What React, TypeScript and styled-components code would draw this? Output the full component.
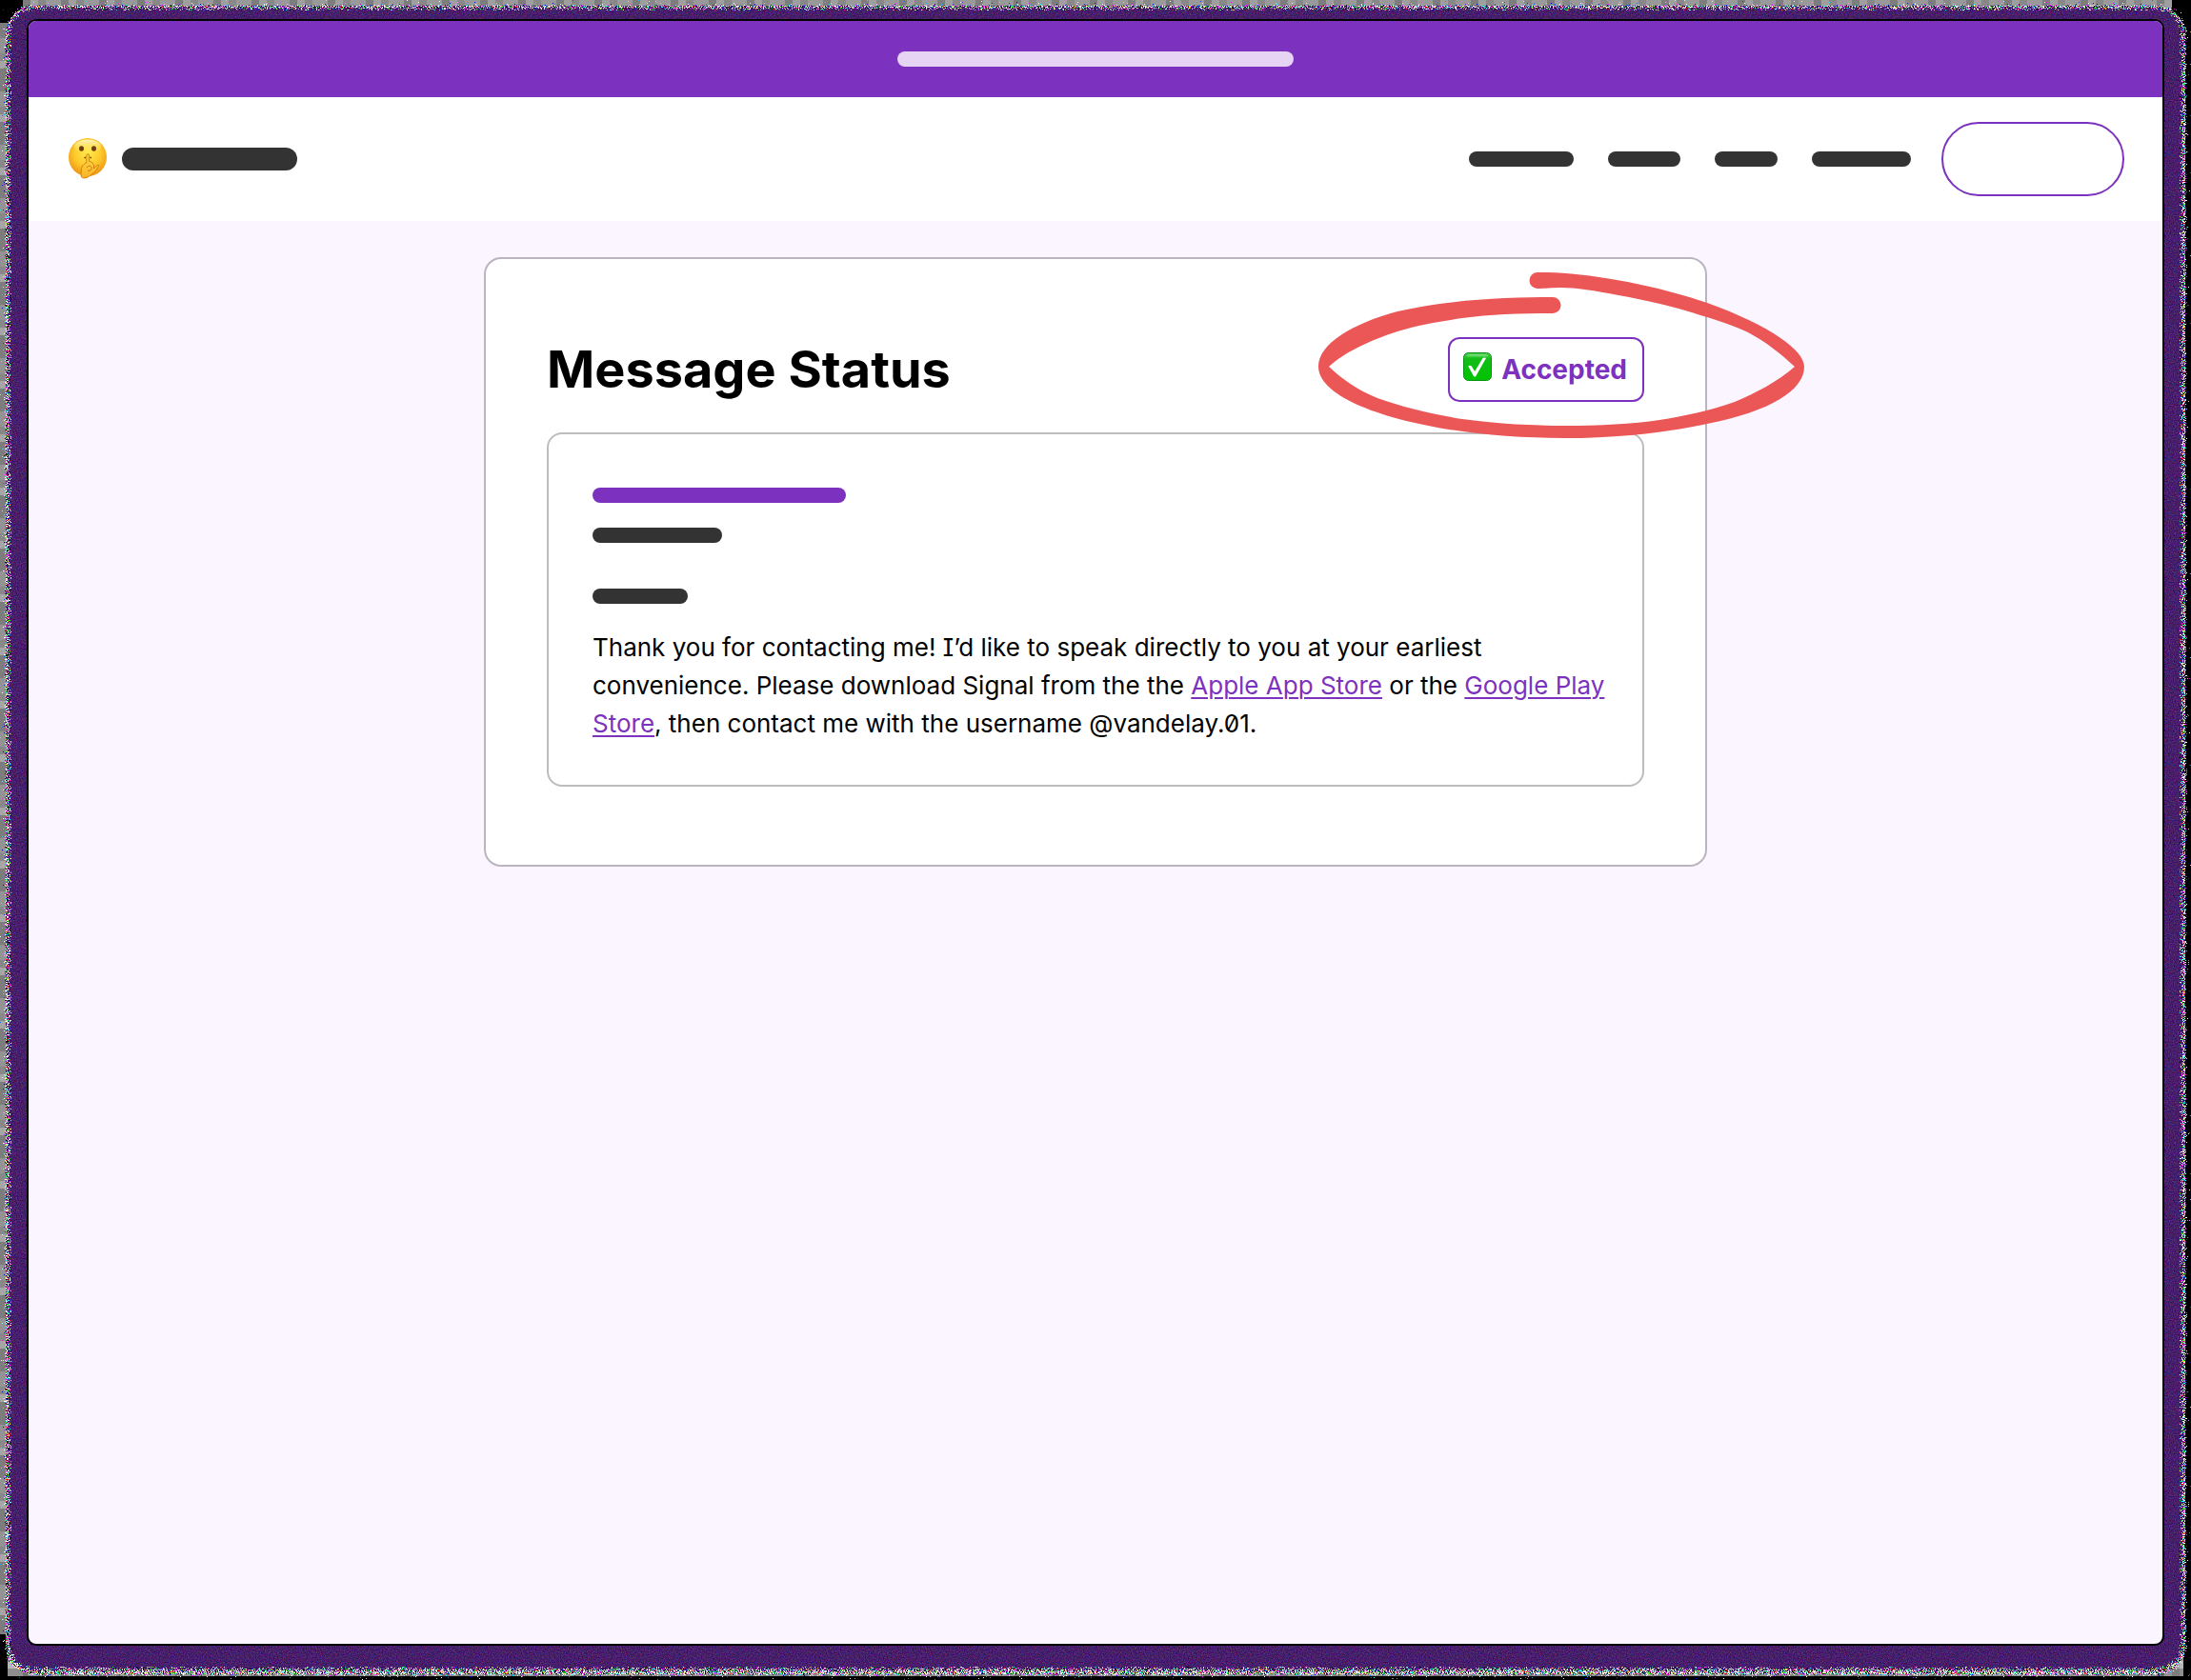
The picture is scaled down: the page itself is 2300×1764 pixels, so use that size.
import React from "react";
import styled, { createGlobalStyle } from "styled-components";

const purple = "#7c32be";
const sans = `Inter, "Liberation Sans", Arial, sans-serif`;

const GlobalStyle = createGlobalStyle`
  *, *::before, *::after { box-sizing: border-box; }
  body {
    margin: 0;
    background: #000;
    color: #000;
    font-family: ${sans};
  }
`;

const Stage = styled.div`
  position: relative;
  display: flex;
  min-height: 100vh;
  padding: 20px 28px 36px;
  overflow: hidden;
  isolation: isolate;
`;

const Backdrop = styled.div`
  position: absolute;
  z-index: -3;
  inset: 0 8px 4px 0;
  background:
    linear-gradient(#000, #000) 0 0 / 24px 24px no-repeat,
    linear-gradient(#000, #000) 0 100% / 8px 44px no-repeat,
    linear-gradient(#000, #000) 100% 0 / 12px 24px no-repeat,
    repeating-linear-gradient(90deg, #8885 0 8px, #bbb5 8px 24px, #6665 24px 32px, #ccc5 32px 40px),
    repeating-linear-gradient(#888 0 8px, #b5b5b5 8px 16px, #777 16px 40px, #999 40px 56px);
`;

const StaticEdge = styled.div`
  position: absolute;
  z-index: -2;
  inset: 6px 6px 6px 6px;
  border-radius: 30px;
  background: #fff;
  filter: url(#static);
`;

const Glow = styled.div`
  position: absolute;
  z-index: -1;
  inset: 9px 10px 12px 10px;
  border-radius: 26px;
  background: #4a1d6c;
  filter: url(#grain);
`;

const FilterDefs = styled.svg`
  position: absolute;
`;

const Window = styled.div`
  flex: 1;
  min-width: 0;
  border: 2px solid #000;
  border-radius: 10px;
  background: #faf5ff;
`;

const Banner = styled.div`
  display: flex;
  align-items: center;
  justify-content: center;
  height: 80px;
  border-radius: 8px 8px 0 0;
  background: ${purple};
`;

const Bar = styled.span<{ $width: number; $height?: number; $color?: string }>`
  display: block;
  width: ${(p) => p.$width}px;
  height: ${(p) => p.$height ?? 16}px;
  border-radius: 12px;
  background: ${(p) => p.$color ?? "#333"};
`;

const Header = styled.header`
  display: flex;
  align-items: center;
  justify-content: space-between;
  height: 130px;
  padding: 0 40px;
  background: #fff;
`;

const Brand = styled.a`
  display: flex;
  align-items: center;
  gap: 14px;
`;

const Nav = styled.nav`
  display: flex;
  align-items: center;
  gap: 36px;
`;

const LoginButton = styled.button`
  width: 192px;
  height: 78px;
  margin-left: -4px;
  border: 2px solid ${purple};
  border-radius: 39px;
  background: #fff;
`;

const Main = styled.main`
  padding: 38px 24px;
`;

const Card = styled.section`
  max-width: 1284px;
  margin: 0 auto;
  padding: 82px 64px;
  border: 2px solid #b9b4bf;
  border-radius: 18px;
  background: #fff;
`;

const CardHead = styled.div`
  display: flex;
  align-items: center;
  justify-content: space-between;
  margin-bottom: 32px;
`;

const Title = styled.h1`
  margin: 0;
  font-size: 54px;
  font-weight: 700;
  line-height: 64px;
`;

const Badge = styled.div`
  position: relative;
  display: flex;
  align-items: center;
  gap: 8px;
  height: 68px;
  padding: 0 16px 0 14px;
  border: 2px solid ${purple};
  border-radius: 12px;
  color: ${purple};
  font-size: 28px;
  font-weight: 700;
`;

const Loop = styled.svg`
  position: absolute;
  top: -70px;
  right: -170px;
  pointer-events: none;
`;

const Message = styled.article`
  display: flex;
  flex-direction: column;
  padding: 56px 38px 44px 46px;
  border: 2px solid #bdbdbd;
  border-radius: 16px;
`;

const Sender = styled.div`
  display: grid;
  gap: 26px;
  margin-bottom: 48px;
`;

const Body = styled.p`
  margin: 26px 0 0;
  font-size: 26px;
  line-height: 40px;
  font-feature-settings: "zero", "cv08";
`;

const Link = styled.a`
  color: ${purple};
  text-decoration: underline;
  text-decoration-thickness: 2px;
  text-underline-offset: 3px;
`;

const ShushFace = () => (
  <svg width="44" height="44" viewBox="0 0 44 44" aria-hidden="true">
    <defs>
      <radialGradient id="face" cx="50%" cy="38%" r="62%">
        <stop offset="0" stopColor="#ffe94e" />
        <stop offset="0.55" stopColor="#fdcb2c" />
        <stop offset="1" stopColor="#ee9413" />
      </radialGradient>
      <linearGradient id="shine" x1="0" y1="0" x2="0" y2="1">
        <stop offset="0" stopColor="#fff8cf" stopOpacity="0.9" />
        <stop offset="1" stopColor="#ffe94e" stopOpacity="0" />
      </linearGradient>
      <linearGradient id="hand" x1="0" y1="0" x2="0" y2="1">
        <stop offset="0" stopColor="#ffd84a" />
        <stop offset="1" stopColor="#f9b428" />
      </linearGradient>
    </defs>
    <circle cx="22" cy="20" r="20" fill="url(#face)" />
    <ellipse cx="22" cy="9" rx="14" ry="7.500" fill="url(#shine)" />
    <ellipse cx="15.500" cy="11" rx="2.500" ry="2.700" fill="#6b3c0c" />
    <ellipse cx="28.500" cy="11" rx="2.500" ry="2.700" fill="#6b3c0c" />
    <path d="M18.500 20.500h1.500M24.500 20.500h1.500" stroke="#6b3c0c" strokeWidth="1.600" />
    <path
      d="M20.800 26V18.300q0-1.600 1.400-1.600t1.400 1.600V24.500c2.800 .2 4.600 2 4.900 4.500v3l3.800-3.600q1.500-.6 1.200 .9c-1.700 3.800-4.300 6.700-7.500 9-2.800 2.200-5 4-8.500 3.600-2.500-.4-2.700-2.500-2.300-5.400 0-5 .6-8.500 5.600-10.500z"
      fill="url(#hand)"
      stroke="#d4820c"
      strokeWidth="1"
    />
    <path d="M21 31c2-3 6-2 5 1.500-.8 2-3 2.300-4 1.500" fill="none" stroke="#c9770b" strokeWidth="1" />
  </svg>
);

const CheckMark = () => (
  <svg width="32" height="36" viewBox="0 0 32 36" aria-hidden="true">
    <defs>
      <linearGradient id="check" x1="0" y1="0" x2="0" y2="1">
        <stop offset="0" stopColor="#4fd253" />
        <stop offset="0.22" stopColor="#12bd16" />
        <stop offset="1" stopColor="#00c400" />
      </linearGradient>
    </defs>
    <rect x="0.500" y="0.500" width="29" height="29" rx="5" fill="url(#check)" stroke="#0b8f18" />
    <path d="M4 4.500q0-2.500 3-2.500h16q3 0 3 2.500z" fill="#fff" opacity="0.250" />
    <path d="M5.200 14.500q1.800-1.500 3.600 0l3.300 5.500L20.500 6q1.800-1 3.500 0L13.300 25q-1.300 1.200-2.300 0z" fill="#fff" />
  </svg>
);

const RedLoop = () => (
  <Loop width="510" height="174" viewBox="0 0 510 174" aria-hidden="true">
    <path
      fill="#eb5757"
      d="M230 0C275-1 350 12 408 32C475 56 510 82 510 99C510 124 474 146 408 159C360 169 310 174 258 174C120 174 0 140 0 99C0 75 35 54 83 41C140 28 200 26 246 26A8.500 8.500 0 0 1 246 43C210 43 180 44 151 48C125 52 105 55 83 62C55 71 27 84 11 99C25 112 40 123 62 132C90 142 120 149 151 154C190 159 225 161 258 161C295 161 330 159 358 155C385 151 415 144 437 136C458 127 482 115 500 99C486 86 470 73 451 63C440 58 425 52 408 47C380 38 350 30 315 24C290 19 270 16 255 16C245 16 238 17 230 17A8.500 8.500 0 0 1 230 0Z"
    />
  </Loop>
);

const Filters = () => (
  <FilterDefs width="0" height="0" aria-hidden="true">
    <filter id="static" x="-1%" y="-1%" width="102%" height="102%" colorInterpolationFilters="sRGB">
      <feTurbulence type="fractalNoise" baseFrequency="0.9" numOctaves="2" seed="4" result="n" />
      <feColorMatrix in="n" values="9 3 0 0 -5.300  3 9 0 0 -5.300  4 4 4 0 -5.300  0 0 0 0 1" result="c" />
      <feColorMatrix in="n" values="0 0 0 0 0  0 0 0 0 0  0 0 0 0 0  0 0 3 0 -1.500" result="a" />
      <feGaussianBlur in="SourceAlpha" stdDeviation="2" result="b" />
      <feComposite in="b" in2="a" operator="arithmetic" k2="10" k3="6" k4="-5" result="m" />
      <feComposite in="c" in2="m" operator="in" />
    </filter>
    <filter id="grain" x="-1%" y="-1%" width="102%" height="102%" colorInterpolationFilters="sRGB">
      <feTurbulence type="fractalNoise" baseFrequency="0.8" numOctaves="2" seed="9" result="n" />
      <feColorMatrix in="n" values="0.5 0 0 0 0.03  0 0.4 0 0 -0.08  0 0 0.5 0 0.17  0 0 0 0 1" result="c" />
      <feColorMatrix in="n" values="0 0 0 0 0  0 0 0 0 0  0 0 0 0 0  0 0 4 0 -1.500" result="a" />
      <feGaussianBlur in="SourceAlpha" stdDeviation="3" result="b" />
      <feComposite in="b" in2="a" operator="arithmetic" k2="9" k3="5" k4="-6" result="m" />
      <feComposite in="c" in2="m" operator="in" />
    </filter>
  </FilterDefs>
);

export default function App() {
  return (
    <Stage>
      <GlobalStyle />
      <Filters />
      <Backdrop />
      <StaticEdge />
      <Glow />
      <Window>
        <Banner>
          <Bar $width={416} $color="#e7d4f5" />
        </Banner>
        <Header>
          <Brand href="#" aria-label="Home">
            <ShushFace />
            <Bar $width={184} $height={24} />
          </Brand>
          <Nav>
            <Bar $width={110} />
            <Bar $width={76} />
            <Bar $width={66} />
            <Bar $width={104} />
            <LoginButton type="button" aria-label="Log in" />
          </Nav>
        </Header>
        <Main>
          <Card>
            <CardHead>
              <Title>Message Status</Title>
              <Badge>
                <CheckMark />
                Accepted
                <RedLoop />
              </Badge>
            </CardHead>
            <Message>
              <Sender>
                <Bar $width={266} $color={purple} />
                <Bar $width={136} />
              </Sender>
              <Bar $width={100} />
              <Body>
                Thank you for contacting me! I’d like to speak directly to you at your earliest
                convenience. Please download Signal from the the <Link href="#">Apple App Store</Link> or
                the <Link href="#">Google Play Store</Link>, then contact me with the username
                @vandelay.01.
              </Body>
            </Message>
          </Card>
        </Main>
      </Window>
    </Stage>
  );
}
